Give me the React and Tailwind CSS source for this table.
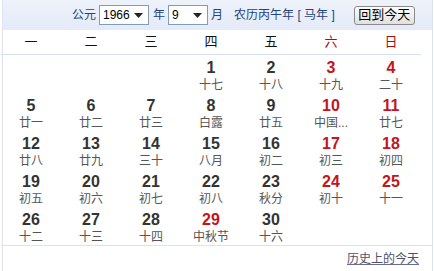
import React from 'react'

const days = [
  null, null, null,
  { d: 1, l: '十七' }, { d: 2, l: '十八' }, { d: 3, l: '十九', red: true }, { d: 4, l: '二十', red: true },
  { d: 5, l: '廿一' }, { d: 6, l: '廿二' }, { d: 7, l: '廿三' }, { d: 8, l: '白露' }, { d: 9, l: '廿五' }, { d: 10, l: '中国...', red: true }, { d: 11, l: '廿七', red: true },
  { d: 12, l: '廿八' }, { d: 13, l: '廿九' }, { d: 14, l: '三十' }, { d: 15, l: '八月' }, { d: 16, l: '初二' }, { d: 17, l: '初三', red: true }, { d: 18, l: '初四', red: true },
  { d: 19, l: '初五' }, { d: 20, l: '初六' }, { d: 21, l: '初七' }, { d: 22, l: '初八' }, { d: 23, l: '秋分' }, { d: 24, l: '初十', red: true }, { d: 25, l: '十一', red: true },
  { d: 26, l: '十二' }, { d: 27, l: '十三' }, { d: 28, l: '十四' }, { d: 29, l: '中秋节', red: true }, { d: 30, l: '十六' }, null, null,
]

const weekdays = ['一', '二', '三', '四', '五', '六', '日']

function FakeSelect({ value, width }) {
  return (
    <div className={`flex h-[20px] items-center justify-between border border-[#7f9db9] bg-white pl-[3px] pr-[5px] text-[12px] text-black ${width}`}>
      <span>{value}</span>
      <svg width="9" height="5" viewBox="0 0 9 5">
        <path d="M0 0h9L4.5 5z" fill="#222" />
      </svg>
    </div>
  )
}

export default function App() {
  return (
    <div className="h-[271px] w-[434px] overflow-hidden bg-white font-['Liberation_Sans','Noto_Sans_CJK_SC',sans-serif]">
      <div className="ml-[2px] mr-[1px] h-full border-x border-[#dbe3f2]">
        {/* Header */}
        <div className="flex h-[30px] items-center bg-gradient-to-b from-[#eef2fb] to-[#e4eaf8] text-[12px] text-[#23457c]">
          <span className="ml-[69px]">公元</span>
          <div className="ml-[3px]"><FakeSelect value="1966" width="w-[50px]" /></div>
          <span className="ml-[4px]">年</span>
          <div className="ml-[3px]"><FakeSelect value="9" width="w-[40px]" /></div>
          <span className="ml-[3px]">月</span>
          <span className="ml-[11px]">农历丙午年 [ 马年 ]</span>
          <button className="ml-[19px] h-[19px] w-[61px] rounded-[3px] border border-[#8a8a8a] bg-gradient-to-b from-[#fdfdfd] to-[#e0e0e0] text-[13px] leading-[16px] text-black">
            回到今天
          </button>
        </div>

        {/* Weekdays */}
        <div className="-ml-[2px] grid h-[25px] w-[420px] grid-cols-7 items-center border-b border-[#d6dfee] text-[13px]">
          {weekdays.map((w, i) => (
            <div key={w} className={`text-center ${i >= 5 ? 'text-[#a50d12]' : 'text-[#111]'}`}>{w}</div>
          ))}
        </div>

        {/* Days */}
        <div className="-ml-[2px] grid w-[420px] grid-cols-7">
          {days.map((c, i) => (
            <div key={i} className="flex h-[38px] flex-col items-center pt-[4px]">
              {c && (
                <>
                  <span className={`text-[16px] font-bold leading-[18px] ${c.red ? 'text-[#c2151d]' : 'text-[#333]'}`}>{c.d}</span>
                  <span className="text-[12px] leading-[16px] text-[#555]">{c.l}</span>
                </>
              )}
            </div>
          ))}
        </div>

        <div className="-ml-[2px] border-t border-[#dde3ee]"></div>

        <div className="flex justify-end pr-[13px] pt-[5px]">
          <a className="text-[12px] leading-[16px] text-[#4f4f6e] underline decoration-[#6a6a96]">历史上的今天</a>
        </div>
      </div>
    </div>
  )
}
